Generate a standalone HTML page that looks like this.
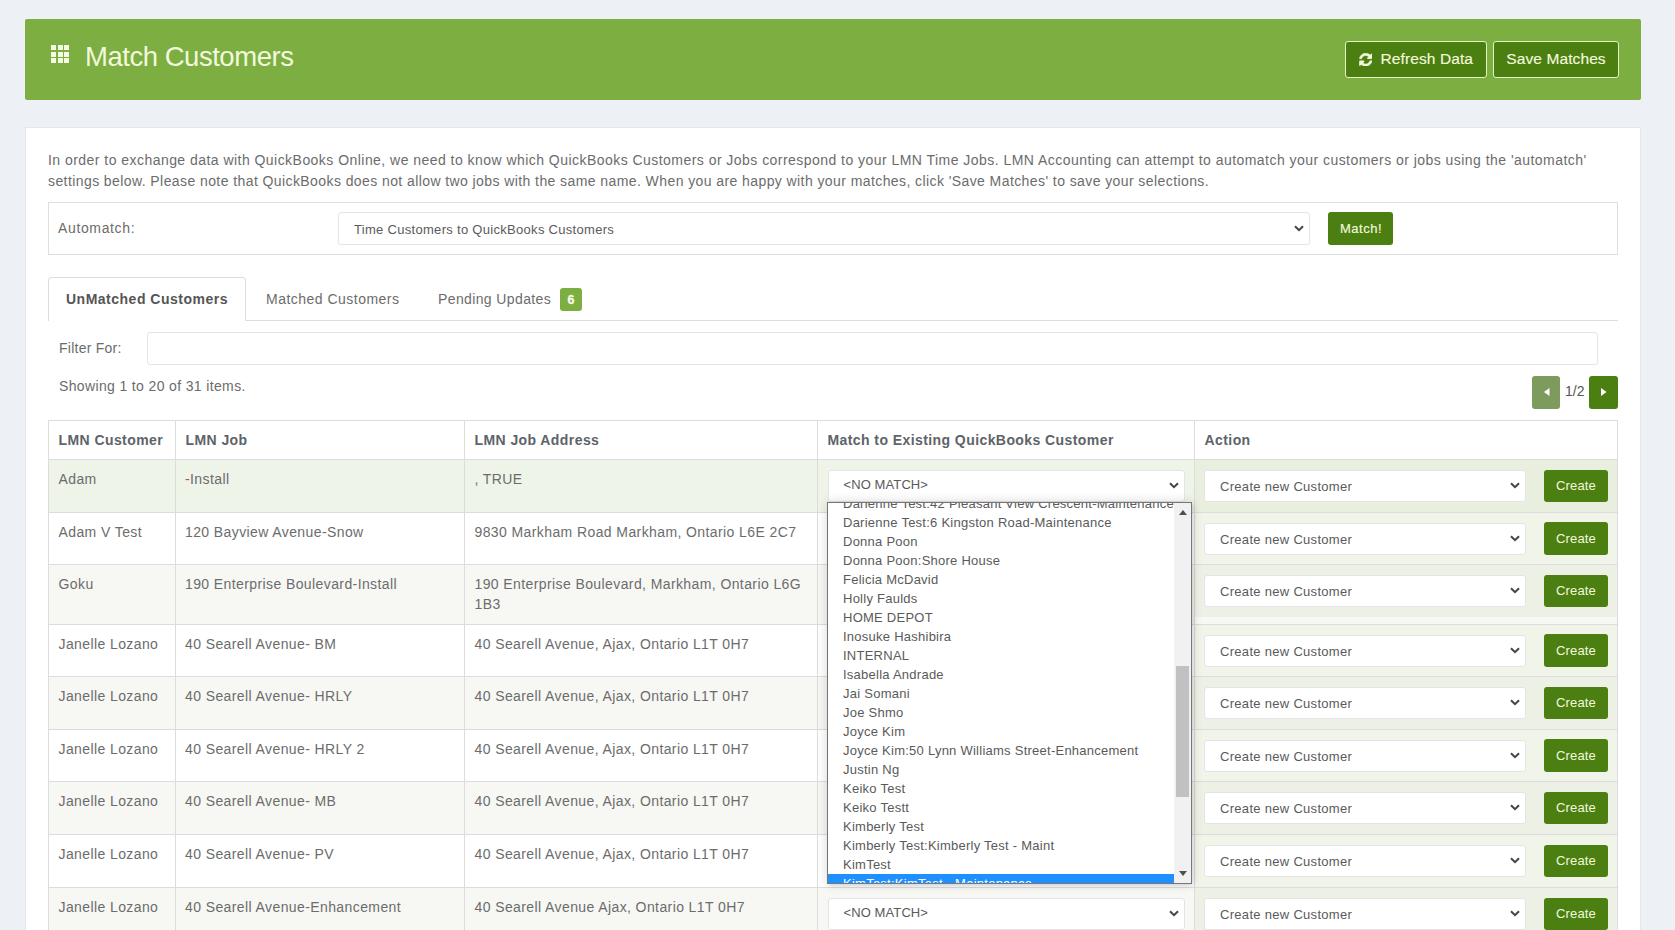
<!DOCTYPE html>
<html><head><meta charset="utf-8">
<style>
*{box-sizing:border-box;margin:0;padding:0}
html,body{width:1675px;height:930px;overflow:hidden}
body{background:#edf0f5;font-family:"Liberation Sans",sans-serif;color:#666;position:relative;font-size:14px}
.a{position:absolute;white-space:nowrap}
#hdr{left:25px;top:19px;width:1616px;height:81px;background:#7cae42;border-radius:2px}
#title{left:85px;top:40.5px;font-size:27.5px;color:#f2f8dc;letter-spacing:-0.47px}
.gicon{left:51px;top:45px;width:18px;height:18px}
.gicon i{position:absolute;width:5px;height:5px;background:#f7fbe3}
.hbtn{height:37px;top:41px;background:#4b7f12;border:1px solid #e8f3c4;border-radius:3px;color:#f4f9dc;font-size:15.5px;line-height:34px;letter-spacing:0.1px;-webkit-text-stroke:0.15px #f4f9dc}
#panel{left:25px;top:127px;width:1616px;height:820px;background:#fff;border:1px solid #e3e6ea}
.t14{font-size:14px;line-height:20px;letter-spacing:0.4px;color:#6c6c6c}
.t13{font-size:13px;line-height:18px;letter-spacing:0.3px;color:#5a5a5a}
.sel{background:#fff;border:1px solid #e4e4e4;border-radius:3px}
.chev{position:absolute}
.gbtn{background:#4b7f12;border-radius:3px;color:#f4f9dc}
.cell{position:absolute;border-right:1px solid #dcdcdc;border-bottom:1px solid #dcdcdc}
.th{font-weight:bold;color:#5e6368;letter-spacing:0.42px}
.dd{left:827px;top:502px;width:365px;height:382px;background:#fff;border:1px solid #767676;overflow:hidden;box-shadow:0 0 10px rgba(0,0,0,0.16),2px 2px 3px rgba(0,0,0,0.08)}
.it{position:absolute;left:0;width:346px;height:19px;font-size:13px;line-height:19px;padding-left:15px;color:#5a5a5a;letter-spacing:0.25px;white-space:nowrap}
</style></head>
<body>
<div id="hdr" class="a"></div>
<div class="a gicon">
<i style="left:0;top:0"></i><i style="left:6.5px;top:0"></i><i style="left:13px;top:0"></i>
<i style="left:0;top:6.5px"></i><i style="left:6.5px;top:6.5px"></i><i style="left:13px;top:6.5px"></i>
<i style="left:0;top:13px"></i><i style="left:6.5px;top:13px"></i><i style="left:13px;top:13px"></i>
</div>
<div id="title" class="a">Match Customers</div>
<div class="a hbtn" style="left:1345px;width:142px;"><svg class="a" style="left:12.5px;top:10.5px" width="13.5" height="13.5" viewBox="-40 -40 1616 1616"><path fill="#f4f9dc" stroke="#f4f9dc" stroke-width="70" stroke-linejoin="round" d="M1511 928q0 5-1 7-64 268-268 434.5T764 1536q-146 0-282.5-55T238 1324l-129 129q-19 19-45 19t-45-19-19-45V960q0-26 19-45t45-19h448q26 0 45 19t19 45-19 45l-137 137q71 66 161 102t187 36q134 0 250-65t186-179q11-17 53-117 8-23 30-23h192q13 0 22.5 9.5t9.5 22.5zm25-800v448q0 26-19 45t-45 19h-448q-26 0-45-19t-19-45 19-45l138-138Q969 256 768 256q-134 0-250 65T332 500q-11 17-53 117-8 23-30 23H50q-13 0-22.5-9.5T18 608v-7q65-268 270-434.5T768 0q146 0 284 55.5T1297 212l130-129q19-19 45-19t45 19 19 45z"/></svg><span class="a" style="left:34.5px;top:-0.5px">Refresh Data</span></div>
<div class="a hbtn" style="left:1493px;width:126px;text-align:center">Save Matches</div>

<div id="panel" class="a"></div>

<div class="a t14" style="left:48px;top:149.5px;line-height:21px;letter-spacing:0.46px">In order to exchange data with QuickBooks Online, we need to know which QuickBooks Customers or Jobs correspond to your LMN Time Jobs. LMN Accounting can attempt to automatch your customers or jobs using the 'automatch'<br><span style="letter-spacing:0.415px">settings below. Please note that QuickBooks does not allow two jobs with the same name. When you are happy with your matches, click 'Save Matches' to save your selections.</span></div>
<div class="a" style="left:48px;top:202px;width:1570px;height:53px;border:1px solid #dfdfdf"></div>
<div class="a t14" style="left:58px;top:218.4px;letter-spacing:0.64px">Automatch:</div>
<div class="a sel" style="left:338px;top:212px;width:972px;height:33px"></div>
<div class="a t13" style="left:354px;top:220.5px">Time Customers to QuickBooks Customers</div>
<svg class="chev" style="left:1294px;top:225px" width="10" height="7" viewBox="0 0 10 7"><path d="M1 1.2 L5 5.2 L9 1.2" fill="none" stroke="#444" stroke-width="2"/></svg>
<div class="a gbtn" style="left:1328px;top:212px;width:65px;height:33px"></div>
<div class="a" style="left:1340px;top:219.5px;font-size:13px;line-height:18px;color:#f4f9dc;letter-spacing:0.5px;-webkit-text-stroke:0.15px #f4f9dc">Match!</div>
<div class="a" style="left:48px;top:319.5px;width:1570px;height:1px;background:#dedede"></div>
<div class="a" style="left:48px;top:277px;width:198px;height:44px;background:#fff;border:1px solid #dedede;border-bottom:none;border-radius:4px 4px 0 0"></div>
<div class="a t14" style="left:66px;top:289px;font-weight:bold;color:#555;letter-spacing:0.5px">UnMatched Customers</div>
<div class="a t14" style="left:266px;top:289px;letter-spacing:0.48px">Matched Customers</div>
<div class="a t14" style="left:438px;top:289px;letter-spacing:0.38px">Pending Updates</div>
<div class="a" style="left:560px;top:288px;width:22px;height:23px;background:#7cae42;border-radius:3px;color:#f7fbe8;font-weight:bold;font-size:12.5px;line-height:24px;text-align:center;-webkit-text-stroke:0.3px #f7fbe8">6</div>
<div class="a t14" style="left:59px;top:337.8px;letter-spacing:0.25px">Filter For:</div>
<div class="a sel" style="left:147px;top:332px;width:1451px;height:33px"></div>
<div class="a t14" style="left:59px;top:375.6px;letter-spacing:0.36px">Showing 1 to 20 of 31 items.</div>
<div class="a" style="left:1532px;top:376px;width:28px;height:33px;background:#7d9b5d;border-radius:3px"><svg class="a" style="left:11.5px;top:12px" width="6" height="8"><path d="M5.5 0 L0 4 L5.5 8Z" fill="#fff"/></svg></div>
<div class="a" style="left:1565px;top:381.3px;font-size:14px;line-height:20px;color:#555">1/2</div>
<div class="a" style="left:1589px;top:376px;width:29px;height:33px;background:#4b7f12;border-radius:3px"><svg class="a" style="left:11.5px;top:12px" width="6" height="8"><path d="M0 0 L5.5 4 L0 8Z" fill="#fff"/></svg></div>
<div class="a" style="left:48px;top:420px;width:1570px;height:40px;background:#fff"></div>
<div class="a" style="left:48px;top:459px;width:1146px;height:53px;background:#eff4e9"></div>
<div class="a" style="left:1194px;top:459px;width:424px;height:53px;background:#eff4e9"></div>
<div class="a" style="left:1194px;top:459px;width:424px;height:53px;background:#e9efdf"></div>
<div class="a" style="left:48px;top:512px;width:1146px;height:52px;background:#fff"></div>
<div class="a" style="left:1194px;top:512px;width:424px;height:52px;background:#fff"></div>
<div class="a" style="left:1194px;top:512px;width:424px;height:52px;background:#f0f4e9"></div>
<div class="a" style="left:48px;top:564px;width:1146px;height:60px;background:#f7f8f4"></div>
<div class="a" style="left:1194px;top:564px;width:424px;height:60px;background:#f7f8f4"></div>
<div class="a" style="left:1194px;top:564px;width:424px;height:53px;background:#ecf0e5"></div>
<div class="a" style="left:48px;top:624px;width:1146px;height:52px;background:#fff"></div>
<div class="a" style="left:1194px;top:624px;width:424px;height:52px;background:#fff"></div>
<div class="a" style="left:1194px;top:624px;width:424px;height:52px;background:#f0f4e9"></div>
<div class="a" style="left:48px;top:676px;width:1146px;height:53px;background:#f7f8f4"></div>
<div class="a" style="left:1194px;top:676px;width:424px;height:53px;background:#f7f8f4"></div>
<div class="a" style="left:1194px;top:676px;width:424px;height:53px;background:#ecf0e5"></div>
<div class="a" style="left:48px;top:729px;width:1146px;height:52px;background:#fff"></div>
<div class="a" style="left:1194px;top:729px;width:424px;height:52px;background:#fff"></div>
<div class="a" style="left:1194px;top:729px;width:424px;height:52px;background:#f0f4e9"></div>
<div class="a" style="left:48px;top:781px;width:1146px;height:53px;background:#f7f8f4"></div>
<div class="a" style="left:1194px;top:781px;width:424px;height:53px;background:#f7f8f4"></div>
<div class="a" style="left:1194px;top:781px;width:424px;height:53px;background:#ecf0e5"></div>
<div class="a" style="left:48px;top:834px;width:1146px;height:53px;background:#fff"></div>
<div class="a" style="left:1194px;top:834px;width:424px;height:53px;background:#fff"></div>
<div class="a" style="left:1194px;top:834px;width:424px;height:53px;background:#f0f4e9"></div>
<div class="a" style="left:48px;top:887px;width:1146px;height:53px;background:#f7f8f4"></div>
<div class="a" style="left:1194px;top:887px;width:424px;height:53px;background:#f7f8f4"></div>
<div class="a" style="left:1194px;top:887px;width:424px;height:53px;background:#ecf0e5"></div>
<div class="a" style="left:48px;top:420px;width:1570px;height:1px;background:#dcdcdc"></div>
<div class="a" style="left:48px;top:459px;width:1570px;height:1px;background:#dcdcdc"></div>
<div class="a" style="left:48px;top:512px;width:1570px;height:1px;background:#dcdcdc"></div>
<div class="a" style="left:48px;top:564px;width:1570px;height:1px;background:#dcdcdc"></div>
<div class="a" style="left:48px;top:624px;width:1570px;height:1px;background:#dcdcdc"></div>
<div class="a" style="left:48px;top:676px;width:1570px;height:1px;background:#dcdcdc"></div>
<div class="a" style="left:48px;top:729px;width:1570px;height:1px;background:#dcdcdc"></div>
<div class="a" style="left:48px;top:781px;width:1570px;height:1px;background:#dcdcdc"></div>
<div class="a" style="left:48px;top:834px;width:1570px;height:1px;background:#dcdcdc"></div>
<div class="a" style="left:48px;top:887px;width:1570px;height:1px;background:#dcdcdc"></div>
<div class="a" style="left:48px;top:420px;width:1px;height:520px;background:#dcdcdc"></div>
<div class="a" style="left:175px;top:420px;width:1px;height:520px;background:#dcdcdc"></div>
<div class="a" style="left:464px;top:420px;width:1px;height:520px;background:#dcdcdc"></div>
<div class="a" style="left:817px;top:420px;width:1px;height:520px;background:#dcdcdc"></div>
<div class="a" style="left:1194px;top:420px;width:1px;height:520px;background:#dcdcdc"></div>
<div class="a" style="left:1617px;top:420px;width:1px;height:520px;background:#dcdcdc"></div>
<div class="a t14 th" style="left:58.5px;top:430px">LMN Customer</div>
<div class="a t14 th" style="left:185.5px;top:430px">LMN Job</div>
<div class="a t14 th" style="left:474.5px;top:430px">LMN Job Address</div>
<div class="a t14 th" style="left:827.5px;top:430px">Match to Existing QuickBooks Customer</div>
<div class="a t14 th" style="left:1204.5px;top:430px">Action</div>
<div class="a t14" style="left:58.5px;top:468.8px">Adam</div>
<div class="a t14" style="left:185px;top:468.8px">-Install</div>
<div class="a t14" style="left:474.5px;top:468.8px">, TRUE</div>
<div class="a sel" style="left:827.5px;top:470.0px;width:357.5px;height:32px"></div>
<div class="a t13" style="left:843.5px;top:476.4px;letter-spacing:0.1px">&lt;NO MATCH&gt;</div>
<svg class="chev" style="left:1169px;top:482.0px" width="10" height="7" viewBox="0 0 10 7"><path d="M1 1.2 L5 5.2 L9 1.2" fill="none" stroke="#444" stroke-width="2"/></svg>
<div class="a sel" style="left:1204px;top:470.0px;width:322px;height:32px"></div>
<div class="a t13" style="left:1220px;top:478.0px">Create new Customer</div>
<svg class="chev" style="left:1510px;top:482.2px" width="10" height="7" viewBox="0 0 10 7"><path d="M1 1.2 L5 5.2 L9 1.2" fill="none" stroke="#444" stroke-width="2"/></svg>
<div class="a gbtn" style="left:1544px;top:469.8px;width:64px;height:32.5px"></div>
<div class="a" style="left:1556px;top:477.2px;font-size:13px;line-height:18px;color:#f4f9dc;letter-spacing:0.15px">Create</div>
<div class="a t14" style="left:58.5px;top:521.8px">Adam V Test</div>
<div class="a t14" style="left:185px;top:521.8px">120 Bayview Avenue-Snow</div>
<div class="a t14" style="left:474.5px;top:521.8px">9830 Markham Road Markham, Ontario L6E 2C7</div>
<div class="a sel" style="left:827.5px;top:522.5px;width:357.5px;height:32px"></div>
<div class="a t13" style="left:843.5px;top:528.9px;letter-spacing:0.1px">&lt;NO MATCH&gt;</div>
<svg class="chev" style="left:1169px;top:534.5px" width="10" height="7" viewBox="0 0 10 7"><path d="M1 1.2 L5 5.2 L9 1.2" fill="none" stroke="#444" stroke-width="2"/></svg>
<div class="a sel" style="left:1204px;top:522.5px;width:322px;height:32px"></div>
<div class="a t13" style="left:1220px;top:530.5px">Create new Customer</div>
<svg class="chev" style="left:1510px;top:534.7px" width="10" height="7" viewBox="0 0 10 7"><path d="M1 1.2 L5 5.2 L9 1.2" fill="none" stroke="#444" stroke-width="2"/></svg>
<div class="a gbtn" style="left:1544px;top:522.3px;width:64px;height:32.5px"></div>
<div class="a" style="left:1556px;top:529.7px;font-size:13px;line-height:18px;color:#f4f9dc;letter-spacing:0.15px">Create</div>
<div class="a t14" style="left:58.5px;top:573.8px">Goku</div>
<div class="a t14" style="left:185px;top:573.8px">190 Enterprise Boulevard-Install</div>
<div class="a t14" style="left:474.5px;top:573.8px">190 Enterprise Boulevard, Markham, Ontario L6G</div>
<div class="a t14" style="left:474.5px;top:593.8px">1B3</div>
<div class="a sel" style="left:827.5px;top:575.0px;width:357.5px;height:32px"></div>
<div class="a t13" style="left:843.5px;top:581.4px;letter-spacing:0.1px">&lt;NO MATCH&gt;</div>
<svg class="chev" style="left:1169px;top:587.0px" width="10" height="7" viewBox="0 0 10 7"><path d="M1 1.2 L5 5.2 L9 1.2" fill="none" stroke="#444" stroke-width="2"/></svg>
<div class="a sel" style="left:1204px;top:575.0px;width:322px;height:32px"></div>
<div class="a t13" style="left:1220px;top:583.0px">Create new Customer</div>
<svg class="chev" style="left:1510px;top:587.2px" width="10" height="7" viewBox="0 0 10 7"><path d="M1 1.2 L5 5.2 L9 1.2" fill="none" stroke="#444" stroke-width="2"/></svg>
<div class="a gbtn" style="left:1544px;top:574.8px;width:64px;height:32.5px"></div>
<div class="a" style="left:1556px;top:582.2px;font-size:13px;line-height:18px;color:#f4f9dc;letter-spacing:0.15px">Create</div>
<div class="a t14" style="left:58.5px;top:633.8px">Janelle Lozano</div>
<div class="a t14" style="left:185px;top:633.8px">40 Searell Avenue- BM</div>
<div class="a t14" style="left:474.5px;top:633.8px">40 Searell Avenue, Ajax, Ontario L1T 0H7</div>
<div class="a sel" style="left:827.5px;top:634.5px;width:357.5px;height:32px"></div>
<div class="a t13" style="left:843.5px;top:640.9px;letter-spacing:0.1px">&lt;NO MATCH&gt;</div>
<svg class="chev" style="left:1169px;top:646.5px" width="10" height="7" viewBox="0 0 10 7"><path d="M1 1.2 L5 5.2 L9 1.2" fill="none" stroke="#444" stroke-width="2"/></svg>
<div class="a sel" style="left:1204px;top:634.5px;width:322px;height:32px"></div>
<div class="a t13" style="left:1220px;top:642.5px">Create new Customer</div>
<svg class="chev" style="left:1510px;top:646.7px" width="10" height="7" viewBox="0 0 10 7"><path d="M1 1.2 L5 5.2 L9 1.2" fill="none" stroke="#444" stroke-width="2"/></svg>
<div class="a gbtn" style="left:1544px;top:634.3px;width:64px;height:32.5px"></div>
<div class="a" style="left:1556px;top:641.7px;font-size:13px;line-height:18px;color:#f4f9dc;letter-spacing:0.15px">Create</div>
<div class="a t14" style="left:58.5px;top:685.8px">Janelle Lozano</div>
<div class="a t14" style="left:185px;top:685.8px">40 Searell Avenue- HRLY</div>
<div class="a t14" style="left:474.5px;top:685.8px">40 Searell Avenue, Ajax, Ontario L1T 0H7</div>
<div class="a sel" style="left:827.5px;top:687.0px;width:357.5px;height:32px"></div>
<div class="a t13" style="left:843.5px;top:693.4px;letter-spacing:0.1px">&lt;NO MATCH&gt;</div>
<svg class="chev" style="left:1169px;top:699.0px" width="10" height="7" viewBox="0 0 10 7"><path d="M1 1.2 L5 5.2 L9 1.2" fill="none" stroke="#444" stroke-width="2"/></svg>
<div class="a sel" style="left:1204px;top:687.0px;width:322px;height:32px"></div>
<div class="a t13" style="left:1220px;top:695.0px">Create new Customer</div>
<svg class="chev" style="left:1510px;top:699.2px" width="10" height="7" viewBox="0 0 10 7"><path d="M1 1.2 L5 5.2 L9 1.2" fill="none" stroke="#444" stroke-width="2"/></svg>
<div class="a gbtn" style="left:1544px;top:686.8px;width:64px;height:32.5px"></div>
<div class="a" style="left:1556px;top:694.2px;font-size:13px;line-height:18px;color:#f4f9dc;letter-spacing:0.15px">Create</div>
<div class="a t14" style="left:58.5px;top:738.8px">Janelle Lozano</div>
<div class="a t14" style="left:185px;top:738.8px">40 Searell Avenue- HRLY 2</div>
<div class="a t14" style="left:474.5px;top:738.8px">40 Searell Avenue, Ajax, Ontario L1T 0H7</div>
<div class="a sel" style="left:827.5px;top:739.5px;width:357.5px;height:32px"></div>
<div class="a t13" style="left:843.5px;top:745.9px;letter-spacing:0.1px">&lt;NO MATCH&gt;</div>
<svg class="chev" style="left:1169px;top:751.5px" width="10" height="7" viewBox="0 0 10 7"><path d="M1 1.2 L5 5.2 L9 1.2" fill="none" stroke="#444" stroke-width="2"/></svg>
<div class="a sel" style="left:1204px;top:739.5px;width:322px;height:32px"></div>
<div class="a t13" style="left:1220px;top:747.5px">Create new Customer</div>
<svg class="chev" style="left:1510px;top:751.7px" width="10" height="7" viewBox="0 0 10 7"><path d="M1 1.2 L5 5.2 L9 1.2" fill="none" stroke="#444" stroke-width="2"/></svg>
<div class="a gbtn" style="left:1544px;top:739.3px;width:64px;height:32.5px"></div>
<div class="a" style="left:1556px;top:746.7px;font-size:13px;line-height:18px;color:#f4f9dc;letter-spacing:0.15px">Create</div>
<div class="a t14" style="left:58.5px;top:790.8px">Janelle Lozano</div>
<div class="a t14" style="left:185px;top:790.8px">40 Searell Avenue- MB</div>
<div class="a t14" style="left:474.5px;top:790.8px">40 Searell Avenue, Ajax, Ontario L1T 0H7</div>
<div class="a sel" style="left:827.5px;top:792.0px;width:357.5px;height:32px"></div>
<div class="a t13" style="left:843.5px;top:798.4px;letter-spacing:0.1px">&lt;NO MATCH&gt;</div>
<svg class="chev" style="left:1169px;top:804.0px" width="10" height="7" viewBox="0 0 10 7"><path d="M1 1.2 L5 5.2 L9 1.2" fill="none" stroke="#444" stroke-width="2"/></svg>
<div class="a sel" style="left:1204px;top:792.0px;width:322px;height:32px"></div>
<div class="a t13" style="left:1220px;top:800.0px">Create new Customer</div>
<svg class="chev" style="left:1510px;top:804.2px" width="10" height="7" viewBox="0 0 10 7"><path d="M1 1.2 L5 5.2 L9 1.2" fill="none" stroke="#444" stroke-width="2"/></svg>
<div class="a gbtn" style="left:1544px;top:791.8px;width:64px;height:32.5px"></div>
<div class="a" style="left:1556px;top:799.2px;font-size:13px;line-height:18px;color:#f4f9dc;letter-spacing:0.15px">Create</div>
<div class="a t14" style="left:58.5px;top:843.8px">Janelle Lozano</div>
<div class="a t14" style="left:185px;top:843.8px">40 Searell Avenue- PV</div>
<div class="a t14" style="left:474.5px;top:843.8px">40 Searell Avenue, Ajax, Ontario L1T 0H7</div>
<div class="a sel" style="left:827.5px;top:845.0px;width:357.5px;height:32px"></div>
<div class="a t13" style="left:843.5px;top:851.4px;letter-spacing:0.1px">&lt;NO MATCH&gt;</div>
<svg class="chev" style="left:1169px;top:857.0px" width="10" height="7" viewBox="0 0 10 7"><path d="M1 1.2 L5 5.2 L9 1.2" fill="none" stroke="#444" stroke-width="2"/></svg>
<div class="a sel" style="left:1204px;top:845.0px;width:322px;height:32px"></div>
<div class="a t13" style="left:1220px;top:853.0px">Create new Customer</div>
<svg class="chev" style="left:1510px;top:857.2px" width="10" height="7" viewBox="0 0 10 7"><path d="M1 1.2 L5 5.2 L9 1.2" fill="none" stroke="#444" stroke-width="2"/></svg>
<div class="a gbtn" style="left:1544px;top:844.8px;width:64px;height:32.5px"></div>
<div class="a" style="left:1556px;top:852.2px;font-size:13px;line-height:18px;color:#f4f9dc;letter-spacing:0.15px">Create</div>
<div class="a t14" style="left:58.5px;top:896.8px">Janelle Lozano</div>
<div class="a t14" style="left:185px;top:896.8px">40 Searell Avenue-Enhancement</div>
<div class="a t14" style="left:474.5px;top:896.8px">40 Searell Avenue Ajax, Ontario L1T 0H7</div>
<div class="a sel" style="left:827.5px;top:898.0px;width:357.5px;height:32px"></div>
<div class="a t13" style="left:843.5px;top:904.4px;letter-spacing:0.1px">&lt;NO MATCH&gt;</div>
<svg class="chev" style="left:1169px;top:910.0px" width="10" height="7" viewBox="0 0 10 7"><path d="M1 1.2 L5 5.2 L9 1.2" fill="none" stroke="#444" stroke-width="2"/></svg>
<div class="a sel" style="left:1204px;top:898.0px;width:322px;height:32px"></div>
<div class="a t13" style="left:1220px;top:906.0px">Create new Customer</div>
<svg class="chev" style="left:1510px;top:910.2px" width="10" height="7" viewBox="0 0 10 7"><path d="M1 1.2 L5 5.2 L9 1.2" fill="none" stroke="#444" stroke-width="2"/></svg>
<div class="a gbtn" style="left:1544px;top:897.8px;width:64px;height:32.5px"></div>
<div class="a" style="left:1556px;top:905.2px;font-size:13px;line-height:18px;color:#f4f9dc;letter-spacing:0.15px">Create</div>
<div class="a dd">
<div class="it" style="top:-8.799999999999955px">Darienne Test:42 Pleasant View Crescent-Maintenance</div>
<div class="it" style="top:10.200000000000045px">Darienne Test:6 Kingston Road-Maintenance</div>
<div class="it" style="top:29.200000000000045px">Donna Poon</div>
<div class="it" style="top:48.200000000000045px">Donna Poon:Shore House</div>
<div class="it" style="top:67.20000000000005px">Felicia McDavid</div>
<div class="it" style="top:86.20000000000005px">Holly Faulds</div>
<div class="it" style="top:105.20000000000005px">HOME DEPOT</div>
<div class="it" style="top:124.20000000000005px">Inosuke Hashibira</div>
<div class="it" style="top:143.20000000000005px">INTERNAL</div>
<div class="it" style="top:162.20000000000005px">Isabella Andrade</div>
<div class="it" style="top:181.20000000000005px">Jai Somani</div>
<div class="it" style="top:200.20000000000005px">Joe Shmo</div>
<div class="it" style="top:219.20000000000005px">Joyce Kim</div>
<div class="it" style="top:238.20000000000005px">Joyce Kim:50 Lynn Williams Street-Enhancement</div>
<div class="it" style="top:257.20000000000005px">Justin Ng</div>
<div class="it" style="top:276.20000000000005px">Keiko Test</div>
<div class="it" style="top:295.20000000000005px">Keiko Testt</div>
<div class="it" style="top:314.20000000000005px">Kimberly Test</div>
<div class="it" style="top:333.20000000000005px">Kimberly Test:Kimberly Test - Maint</div>
<div class="it" style="top:352.20000000000005px">KimTest</div>
<div class="it" style="top:371.20000000000005px;background:#1e90ff;color:#fff">KimTest:KimTest - Maintenance</div>
<div class="a" style="left:346px;top:0;width:17px;height:380px;background:#f1f1f1"></div>
<div class="a" style="left:347.5px;top:163px;width:13px;height:131px;background:#c1c1c1"></div>
<svg class="a" style="left:351px;top:7px" width="8" height="5"><path d="M4 0 L8 5 L0 5Z" fill="#505050"/></svg>
<svg class="a" style="left:351px;top:368px" width="8" height="5"><path d="M0 0 L8 0 L4 5Z" fill="#505050"/></svg>
</div>
</body></html>
